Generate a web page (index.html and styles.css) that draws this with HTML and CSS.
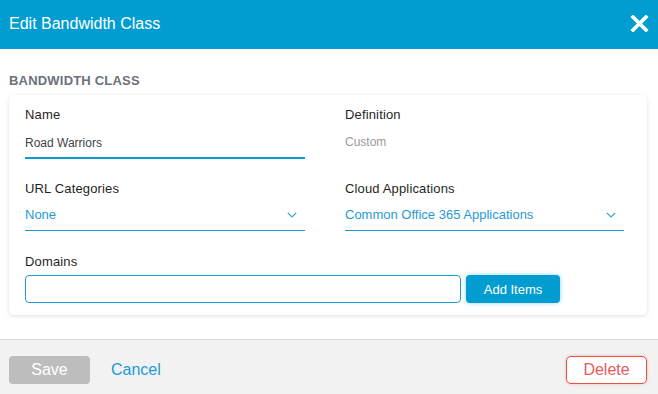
FILE: index.html
```html
<!DOCTYPE html>
<html>
<head>
<meta charset="utf-8">
<title>Edit Bandwidth Class</title>
<link rel="stylesheet" href="styles.css">
</head>
<body>
<div class="modal">
  <header class="modal-header">
    <h1 class="modal-title">Edit Bandwidth Class</h1>
    <button class="close-btn" aria-label="Close">
      <svg width="19" height="17" viewBox="0 0 19 17"><path d="M3 2 L16 15 M16 2 L3 15" stroke="#fff" stroke-width="3.6" stroke-linecap="square" fill="none"/></svg>
    </button>
  </header>
  <main class="modal-body">
    <div class="section-title">BANDWIDTH CLASS</div>
    <div class="card">
      <div class="grid">
        <div class="field">
          <div class="label">Name</div>
          <div class="text-input active">Road Warriors</div>
        </div>
        <div class="field">
          <div class="label">Definition</div>
          <div class="text-input static">Custom</div>
        </div>
        <div class="field">
          <div class="label">URL Categories</div>
          <div class="select">
            <span>None</span>
            <svg class="chev" width="10" height="6" viewBox="0 0 10 6"><path d="M0.8 0.8 L5 5 L9.2 0.8" stroke="#3aa0d8" stroke-width="1.2" fill="none"/></svg>
          </div>
        </div>
        <div class="field">
          <div class="label">Cloud Applications</div>
          <div class="select">
            <span>Common Office 365 Applications</span>
            <svg class="chev" width="10" height="6" viewBox="0 0 10 6"><path d="M0.8 0.8 L5 5 L9.2 0.8" stroke="#3aa0d8" stroke-width="1.2" fill="none"/></svg>
          </div>
        </div>
      </div>
      <div class="domains">
        <div class="label">Domains</div>
        <div class="domain-row">
          <div class="domain-input"></div>
          <button class="add-btn">Add Items</button>
        </div>
      </div>
    </div>
  </main>
  <footer class="modal-footer">
    <button class="save-btn">Save</button>
    <a class="cancel-link">Cancel</a>
    <span class="spacer"></span>
    <button class="delete-btn">Delete</button>
  </footer>
</div>
</body>
</html>
```
FILE: styles.css
```css
html, body {
  margin: 0;
  padding: 0;
  overflow: hidden;
  background: #ffffff;
  font-family: "Liberation Sans", Arial, sans-serif;
}
.modal {
  width: 658px;
  height: 394px;
  display: flex;
  flex-direction: column;
}
.modal-header {
  height: 49px;
  background: #029dd0;
  display: flex;
  align-items: center;
  justify-content: space-between;
  padding: 0 9px 2px 9px;
  box-sizing: border-box;
}
.modal-title {
  margin: 0;
  font-size: 16px;
  font-weight: 400;
  color: #ffffff;
  line-height: 18px;
}
.close-btn {
  background: none;
  border: 0;
  padding: 0;
  margin: 0 0 0 0;
  width: 19px;
  height: 17px;
  display: flex;
}
.modal-body {
  padding: 24px 11px 0 9px;
}
.section-title {
  font-size: 13px;
  line-height: 15px;
  font-weight: 700;
  letter-spacing: 0.2px;
  color: #6e7179;
  margin-bottom: 7px;
}
.card {
  background: #fff;
  border-radius: 5px;
  box-shadow: 0 1px 4px rgba(0, 0, 0, 0.13);
  padding: 12px 23px 12px 16px;
  height: 220px;
  box-sizing: border-box;
}
.grid {
  display: grid;
  grid-template-columns: 280px 279px;
  column-gap: 40px;
  row-gap: 22px;
}
.label {
  font-size: 13px;
  line-height: 15px;
  color: #1f1f1f;
  letter-spacing: 0.15px;
}
.text-input {
  margin-top: 14px;
  font-size: 12px;
  line-height: 14px;
  padding-bottom: 7px;
  border-bottom: 2px solid #0a9dd0;
  color: #3f3f4a;
}
.text-input.static {
  border-bottom-color: transparent;
  color: #9a9a9a;
  margin-top: 13px;
  padding-bottom: 8px;
}
.select {
  margin-top: 11px;
  font-size: 13px;
  line-height: 15px;
  color: #1f9ad6;
  padding-bottom: 8px;
  border-bottom: 1px solid #1a9dd0;
  display: flex;
  align-items: center;
  justify-content: space-between;
  padding-right: 8px;
}
.chev {
  margin-top: 1px;
}
.domains {
  margin-top: 23px;
}
.domain-row {
  margin-top: 6px;
  display: flex;
  gap: 5px;
}
.domain-input {
  width: 436px;
  height: 28px;
  box-sizing: border-box;
  border: 1px solid #1a9dd0;
  border-radius: 4px;
}
.add-btn {
  width: 94px;
  height: 28px;
  border: 0;
  border-radius: 4px;
  background: #029dd0;
  color: #fff;
  font-family: "Liberation Sans", Arial, sans-serif;
  font-size: 13px;
  padding: 0;
  box-shadow: 0 0 4px rgba(2, 157, 208, 0.45);
}
.modal-footer {
  margin-top: 24px;
  flex: 1;
  background: #f2f2f2;
  border-top: 1px solid #e0e0e0;
  display: flex;
  align-items: flex-start;
  padding: 16px 11px 0 9px;
}
.save-btn {
  width: 81px;
  height: 28px;
  border: 0;
  border-radius: 4px;
  background: #bdbdbd;
  color: #fff;
  font-family: "Liberation Sans", Arial, sans-serif;
  font-size: 16px;
  padding: 0;
}
.cancel-link {
  margin-left: 21px;
  font-size: 16px;
  line-height: 28px;
  color: #1a9ad6;
}
.spacer {
  flex: 1;
}
.delete-btn {
  width: 81px;
  height: 28px;
  box-sizing: border-box;
  border: 1px solid #ee4c3f;
  border-radius: 5px;
  background: #fff;
  color: #e55a5c;
  font-family: "Liberation Sans", Arial, sans-serif;
  font-size: 16px;
  padding: 0;
  box-shadow: 0 0 3px rgba(238, 76, 63, 0.35);
}
```
